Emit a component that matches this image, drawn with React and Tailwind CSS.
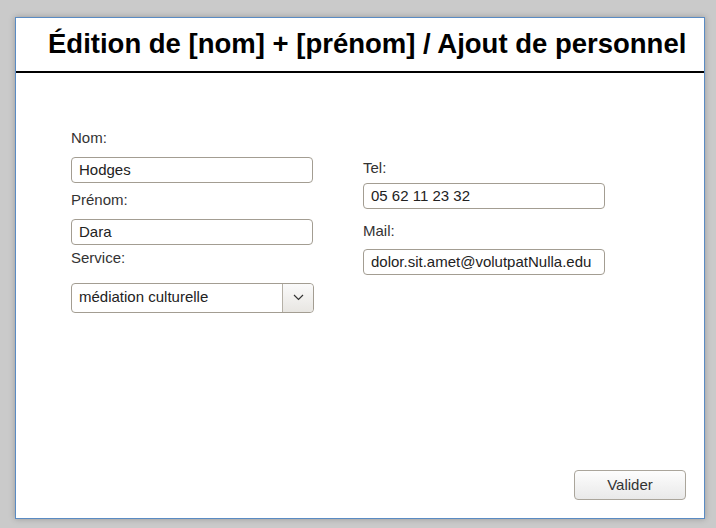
import React from "react";

const font = { fontFamily: '"Liberation Sans", Arial, sans-serif' };

function Field({ label, value, labelClass = "", inputClass = "" }) {
  return (
    <>
      <div className={`h-[18px] leading-[18px] text-[15px] text-[#333] ${labelClass}`}>{label}</div>
      <div
        className={`h-[26px] w-[242px] rounded-[4px] border border-[#a39d92] bg-white pl-[7px] pt-[1px] flex items-center text-[15px] text-[#222] ${inputClass}`}
      >
        {value}
      </div>
    </>
  );
}

export default function App() {
  return (
    <div className="w-[716px] h-[528px] bg-[#cacaca] pt-[17px] pl-[15px]" style={font}>
      <div className="w-[690px] h-[502px] bg-white border border-[#5a8bc3] shadow-[0_0_6px_rgba(0,0,0,0.25)] flex flex-col">
        <div className="h-[55px] border-b-2 border-black pl-[32px] pt-[9px]">
          <h1 className="text-[27.5px] leading-[34px] font-bold text-black whitespace-nowrap">
            Édition de [nom] + [prénom] / Ajout de personnel
          </h1>
        </div>
        <div className="flex-1 flex flex-col">
          <div className="flex pl-[55px] gap-[49px]">
            <div className="flex flex-col pt-[56px]">
              <Field label="Nom:" value="Hodges" inputClass="mt-[9.5px]" />
              <Field label="Prénom:" value="Dara" labelClass="mt-[8.5px]" inputClass="mt-[9.5px]" />
              <div className="h-[18px] leading-[18px] text-[15px] text-[#333] mt-[4.5px]">Service:</div>
              <div className="mt-[15.5px] h-[30px] w-[243px] rounded-[4px] border border-[#a39d92] bg-white flex text-[15px] text-[#222]">
                <div className="flex-1 flex items-center pl-[7px]">médiation culturelle</div>
                <div className="w-[31px] border-l border-[#b5b0a6] bg-gradient-to-b from-[#fafafa] to-[#e8e6e2] rounded-r-[4px] flex items-center justify-center">
                  <svg width="11" height="7" viewBox="0 0 11 7" fill="none">
                    <path d="M1 1 L5.5 5.5 L10 1" stroke="#333" strokeWidth="1.2" />
                  </svg>
                </div>
              </div>
            </div>
            <div className="flex flex-col pt-[86px]">
              <Field label="Tel:" value="05 62 11 23 32" inputClass="mt-[5.5px]" />
              <Field label="Mail:" value="dolor.sit.amet@volutpatNulla.edu" labelClass="mt-[13.5px]" inputClass="mt-[8.5px]" />
            </div>
          </div>
          <div className="mt-auto flex justify-end pr-[18px] pb-[18px]">
            <button className="w-[112px] h-[30px] rounded-[4px] border border-[#aaa59b] bg-gradient-to-b from-[#fdfdfd] to-[#e9e9e9] text-[15px] text-[#333]">
              Valider
            </button>
          </div>
        </div>
      </div>
    </div>
  );
}
